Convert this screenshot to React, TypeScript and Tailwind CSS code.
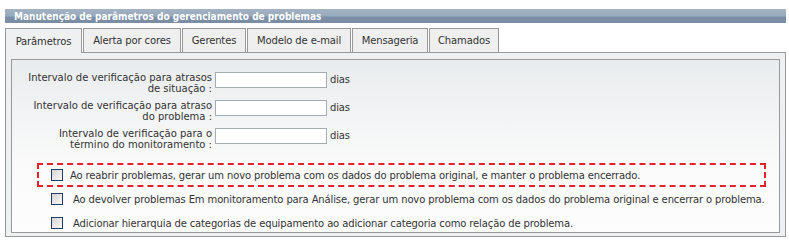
import React from "react";

const tabs: [string, string][] = [
  ["Parâmetros", "w-[77px]"],
  ["Alerta por cores", "w-[98px]"],
  ["Gerentes", "w-[64px]"],
  ["Modelo de e-mail", "w-[104px]"],
  ["Mensageria", "w-[76px]"],
  ["Chamados", "w-[70px]"],
];

const intervals = [
  ["Intervalo de verificação para atrasos", "de situação :"],
  ["Intervalo de verificação para atraso", "do problema :"],
  ["Intervalo de verificação para o", "término do monitoramento :"],
];

const Check = () => (
  <span className="inline-block w-[12px] h-[12px] shrink-0 border border-[#1f3e66] bg-[linear-gradient(135deg,#d4d4d4,#fafafa)]" />
);

const App = () => {
  return (
    <div className="w-[789px] h-[244px] bg-white pt-[9px] pl-[5px] pr-[3px] text-[10px] tracking-[-0.13px] text-[#333] font-['DejaVu_Sans',sans-serif]">
      <div className="h-[14px] pl-[9px] flex items-center font-bold text-white tracking-[0px] font-['DejaVu_Sans_Condensed','DejaVu_Sans',sans-serif] bg-[linear-gradient(to_bottom,#a3b3c4_0%,#97a9bb_50%,#7b8fa6_58%,#7a8da4_100%)]">
        Manutenção de parâmetros do gerenciamento de problemas
      </div>

      <div className="mt-[5px] flex gap-[1px] relative z-10">
        {tabs.map(([t, w], i) => (
          <div
            key={t}
            className={
              (i === 0
                ? "h-[25px] -mb-px bg-[#eef0f1] "
                : "h-[24px] bg-[#efefef] ") +
              w +
              " flex items-center justify-center border border-b-0 border-[#999]"
            }
          >
            {t}
          </div>
        ))}
      </div>

      <div className="border border-[#999] bg-[#eef0f1] pt-[6px] px-[5px] pb-[3px]">
        <div className="h-[174px] border border-[#999] bg-[linear-gradient(to_bottom,#e9ecee,#fafafa_60%,#fdfdfd)] pt-[12px]">
          <div className="flex flex-col gap-[6px]">
            {intervals.map(([a, b]) => (
              <div key={a} className="flex items-start h-[22px]">
                <div className="w-[200px] text-right leading-[11px] tracking-[0px]">
                  {a}
                  <br />
                  {b}
                </div>
                <input className="ml-[3px] w-[112px] h-[16px] border border-[#a5acb2] bg-white" />
                <span className="ml-[3px] leading-[16px]">dias</span>
              </div>
            ))}
          </div>

          <div className="mt-[13px] ml-[25px] w-[729px] h-[24px] flex items-center pl-[12px] border-2 border-dashed border-[#e3202b]">
            <Check />
            <span className="ml-[7px] whitespace-nowrap">
              Ao reabrir problemas, gerar um novo problema com os dados do problema original, e manter o problema encerrado.
            </span>
          </div>
          <div className="ml-[39px] h-[24px] flex items-center">
            <Check />
            <span className="ml-[10px] whitespace-nowrap">
              Ao devolver problemas Em monitoramento para Análise, gerar um novo problema com os dados do problema original e encerrar o problema.
            </span>
          </div>
          <div className="ml-[39px] h-[24px] flex items-center">
            <Check />
            <span className="ml-[10px] whitespace-nowrap">
              Adicionar hierarquia de categorias de equipamento ao adicionar categoria como relação de problema.
            </span>
          </div>
        </div>
      </div>
    </div>
  );
};

export default App;
